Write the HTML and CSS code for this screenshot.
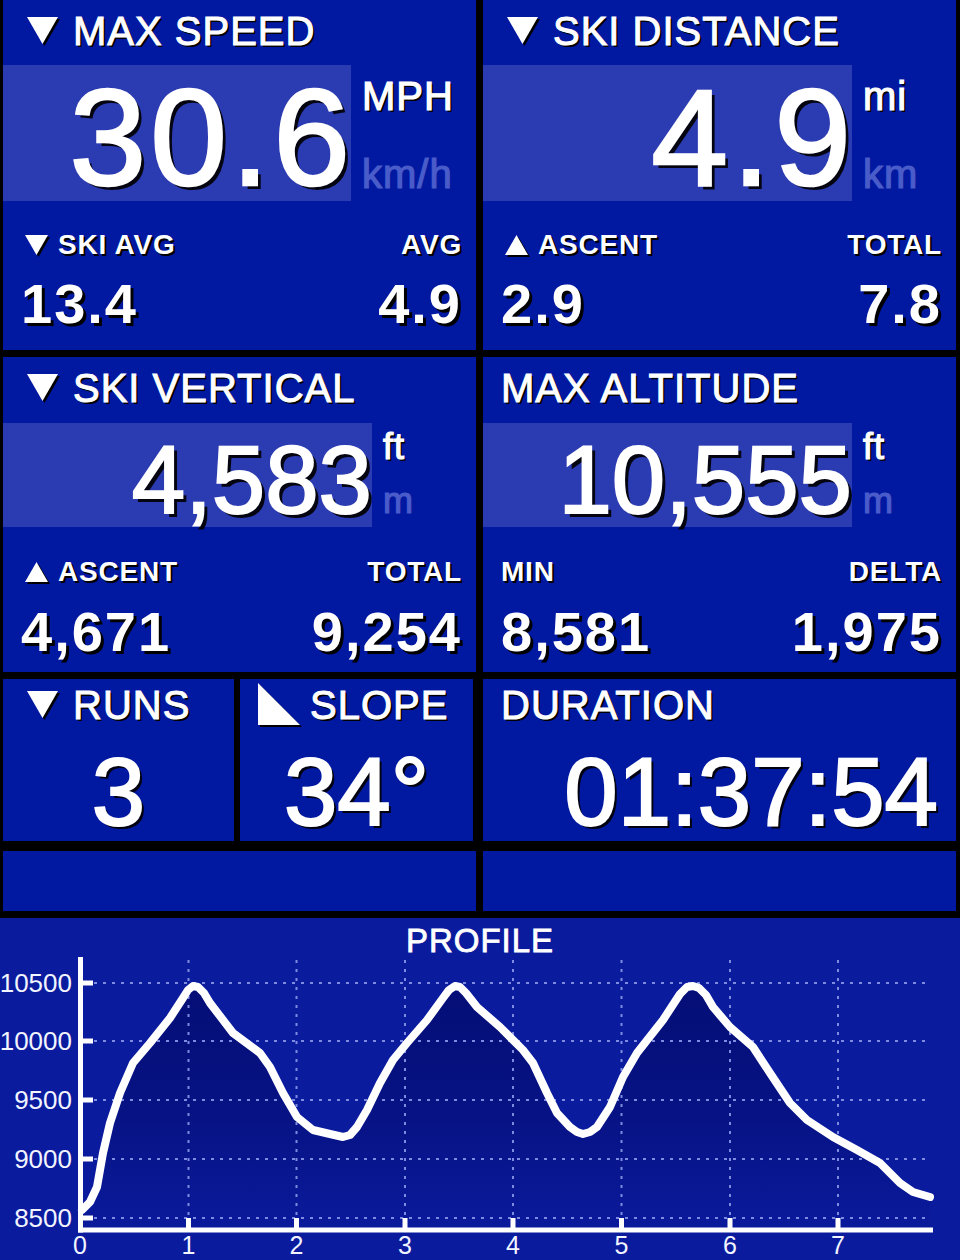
FILE: index.html
```html
<!DOCTYPE html>
<html lang="en">
<head>
    <meta charset="UTF-8">
    <meta name="viewport" content="width=device-width, initial-scale=1.0">
    <title>Ski Tracker</title>
    <link rel="stylesheet" href="styles.css">
</head>
<body>
    <div class="board">
        <div class="row row-main">
            <div class="card card-large">
                <div class="title">
                    <svg class="tri" viewBox="0 0 31 27"><polygon points="0,0 31,0 15.5,27"/></svg>
                    <span>MAX SPEED</span>
                </div>
                <div class="reading">
                    <div class="value-box box-wide"><span class="big">30.6</span></div>
                    <div class="units">
                        <span class="unit">MPH</span>
                        <span class="unit dim">km/h</span>
                    </div>
                </div>
                <div class="stats">
                    <div class="stat-row">
                        <span class="label"><svg class="tri-sm" viewBox="0 0 23 20"><polygon points="0,0 23,0 11.5,20"/></svg>SKI AVG</span>
                        <span class="label">AVG</span>
                    </div>
                    <div class="stat-row values">
                        <span>13.4</span>
                        <span>4.9</span>
                    </div>
                </div>
            </div>
            <div class="card card-large">
                <div class="title">
                    <svg class="tri" viewBox="0 0 31 27"><polygon points="0,0 31,0 15.5,27"/></svg>
                    <span>SKI DISTANCE</span>
                </div>
                <div class="reading">
                    <div class="value-box"><span class="big">4.9</span></div>
                    <div class="units">
                        <span class="unit">mi</span>
                        <span class="unit dim">km</span>
                    </div>
                </div>
                <div class="stats">
                    <div class="stat-row">
                        <span class="label"><svg class="tri-sm" viewBox="0 0 23 20"><polygon points="11.5,0 23,20 0,20"/></svg>ASCENT</span>
                        <span class="label">TOTAL</span>
                    </div>
                    <div class="stat-row values">
                        <span>2.9</span>
                        <span>7.8</span>
                    </div>
                </div>
            </div>
        </div>

        <div class="row row-alt">
            <div class="card card-mid">
                <div class="title">
                    <svg class="tri" viewBox="0 0 31 27"><polygon points="0,0 31,0 15.5,27"/></svg>
                    <span>SKI VERTICAL</span>
                </div>
                <div class="reading">
                    <div class="value-box"><span class="big">4,583</span></div>
                    <div class="units">
                        <span class="unit">ft</span>
                        <span class="unit dim">m</span>
                    </div>
                </div>
                <div class="stats">
                    <div class="stat-row">
                        <span class="label"><svg class="tri-sm" viewBox="0 0 23 20"><polygon points="11.5,0 23,20 0,20"/></svg>ASCENT</span>
                        <span class="label">TOTAL</span>
                    </div>
                    <div class="stat-row values">
                        <span>4,671</span>
                        <span>9,254</span>
                    </div>
                </div>
            </div>
            <div class="card card-mid">
                <div class="title">
                    <span>MAX ALTITUDE</span>
                </div>
                <div class="reading">
                    <div class="value-box"><span class="big">10,555</span></div>
                    <div class="units">
                        <span class="unit">ft</span>
                        <span class="unit dim">m</span>
                    </div>
                </div>
                <div class="stats">
                    <div class="stat-row">
                        <span class="label">MIN</span>
                        <span class="label">DELTA</span>
                    </div>
                    <div class="stat-row values">
                        <span>8,581</span>
                        <span>1,975</span>
                    </div>
                </div>
            </div>
        </div>

        <div class="row row-small">
            <div class="pair">
                <div class="card card-small">
                    <div class="title">
                        <svg class="tri" viewBox="0 0 31 27"><polygon points="0,0 31,0 15.5,27"/></svg>
                        <span>RUNS</span>
                    </div>
                    <div class="count">3</div>
                </div>
                <div class="card card-small">
                    <div class="title">
                        <svg class="slope" viewBox="0 0 42 42"><polygon points="0,0 0,42 42,42"/></svg>
                        <span>SLOPE</span>
                    </div>
                    <div class="count">34°</div>
                </div>
            </div>
            <div class="card card-small">
                <div class="title">
                    <span>DURATION</span>
                </div>
                <div class="count count-right">01:37:54</div>
            </div>
        </div>

        <div class="row row-empty">
            <div class="card"></div>
            <div class="card"></div>
        </div>

        <div class="chart">
            <div class="chart-title">PROFILE</div>
            <svg class="plot" viewBox="0 957 960 303">
                <defs>
                    <linearGradient id="area" x1="0" y1="0" x2="0" y2="1">
                        <stop offset="0" stop-color="#050e76"/>
                        <stop offset="0.55" stop-color="#071385"/>
                        <stop offset="1" stop-color="#0a1a9c"/>
                    </linearGradient>
                </defs>
                <path fill="url(#area)" d="M82,1230 L82,1210 L90,1202 L97,1187 L103,1153 L110,1123 L120,1093 L133,1063 L150,1043 L170,1018 L183,998 L188,990 L193,986 L198,987 L204,993 L210,1003 L233,1033 L260,1053 L270,1067 L283,1093 L297,1117 L313,1130 L330,1134 L343,1137 L350,1135 L357,1127 L367,1110 L380,1083 L393,1060 L407,1043 L427,1020 L443,998 L449,990 L455,986 L460,987 L466,993 L477,1007 L500,1027 L523,1050 L533,1063 L547,1093 L557,1113 L570,1127 L577,1132 L583,1134 L590,1132 L597,1127 L610,1107 L623,1077 L637,1053 L663,1020 L680,994 L687,987 L693,986 L699,988 L706,995 L713,1007 L730,1027 L753,1047 L770,1073 L790,1103 L807,1120 L833,1137 L857,1150 L880,1163 L900,1183 L913,1192 L930,1197 L930,1230 Z"/>
                <g class="grid">
                    <line x1="94" y1="983" x2="930" y2="983"/>
                    <line x1="94" y1="1041" x2="930" y2="1041"/>
                    <line x1="94" y1="1100" x2="930" y2="1100"/>
                    <line x1="94" y1="1159" x2="930" y2="1159"/>
                    <line x1="94" y1="1218" x2="930" y2="1218"/>
                    <line x1="188.5" y1="960" x2="188.5" y2="1216"/>
                    <line x1="296.5" y1="960" x2="296.5" y2="1216"/>
                    <line x1="405" y1="960" x2="405" y2="1216"/>
                    <line x1="513" y1="960" x2="513" y2="1216"/>
                    <line x1="621.5" y1="960" x2="621.5" y2="1216"/>
                    <line x1="730" y1="960" x2="730" y2="1216"/>
                    <line x1="838" y1="960" x2="838" y2="1216"/>
                </g>
                <polyline class="curve" points="82,1210 90,1202 97,1187 103,1153 110,1123 120,1093 133,1063 150,1043 170,1018 183,998 188,990 193,986 198,987 204,993 210,1003 233,1033 260,1053 270,1067 283,1093 297,1117 313,1130 330,1134 343,1137 350,1135 357,1127 367,1110 380,1083 393,1060 407,1043 427,1020 443,998 449,990 455,986 460,987 466,993 477,1007 500,1027 523,1050 533,1063 547,1093 557,1113 570,1127 577,1132 583,1134 590,1132 597,1127 610,1107 623,1077 637,1053 663,1020 680,994 687,987 693,986 699,988 706,995 713,1007 730,1027 753,1047 770,1073 790,1103 807,1120 833,1137 857,1150 880,1163 900,1183 913,1192 930,1197"/>
                <g class="axis">
                    <line x1="80.5" y1="957" x2="80.5" y2="1232.5"/>
                    <line x1="78" y1="1230" x2="933" y2="1230"/>
                    <line x1="80" y1="983" x2="93" y2="983"/>
                    <line x1="80" y1="1041" x2="93" y2="1041"/>
                    <line x1="80" y1="1100" x2="93" y2="1100"/>
                    <line x1="80" y1="1159" x2="93" y2="1159"/>
                    <line x1="80" y1="1218" x2="93" y2="1218"/>
                    <line x1="188.5" y1="1218" x2="188.5" y2="1230"/>
                    <line x1="296.5" y1="1218" x2="296.5" y2="1230"/>
                    <line x1="405" y1="1218" x2="405" y2="1230"/>
                    <line x1="513" y1="1218" x2="513" y2="1230"/>
                    <line x1="621.5" y1="1218" x2="621.5" y2="1230"/>
                    <line x1="730" y1="1218" x2="730" y2="1230"/>
                    <line x1="838" y1="1218" x2="838" y2="1230"/>
                </g>
                <g class="y-labels">
                    <text x="72" y="992">10500</text>
                    <text x="72" y="1050">10000</text>
                    <text x="72" y="1109">9500</text>
                    <text x="72" y="1168">9000</text>
                    <text x="72" y="1227">8500</text>
                </g>
                <g class="x-labels">
                    <text x="80" y="1254">0</text>
                    <text x="188.5" y="1254">1</text>
                    <text x="296.5" y="1254">2</text>
                    <text x="405" y="1254">3</text>
                    <text x="513" y="1254">4</text>
                    <text x="621.5" y="1254">5</text>
                    <text x="730" y="1254">6</text>
                    <text x="838" y="1254">7</text>
                </g>
            </svg>
        </div>
    </div>
</body>
</html>
```

FILE: styles.css
```css
* {
    margin: 0;
    padding: 0;
    box-sizing: border-box;
}

body {
    background-color: #000;
    font-family: "Liberation Sans", Arial, sans-serif;
    color: #fff;
    overflow: hidden;
}

.board {
    width: 960px;
    height: 1260px;
    display: flex;
    flex-direction: column;
    gap: 7px;
}

.row {
    display: grid;
    grid-template-columns: 473px 473px;
    column-gap: 7px;
    padding: 0 4px 0 3px;
}

.row-main {
    height: 350px;
}

.row-alt {
    height: 315px;
}

.row-small {
    height: 162px;
}

.row-empty {
    height: 60px;
    margin-top: 3px;
}

.card {
    background-color: #0119a1;
    display: flex;
    flex-direction: column;
}

.pair {
    display: grid;
    grid-template-columns: 231px 233px;
    column-gap: 6px;
}

/* headings */

.title {
    display: flex;
    align-items: flex-start;
    padding: 11px 0 0 18px;
    font-size: 40px;
    line-height: 40px;
    letter-spacing: 1px;
    -webkit-text-stroke: 1px #fff;
    text-shadow: 2px 2px 0 #000;
    white-space: nowrap;
}

.card-small .title {
    padding-top: 6px;
}

.tri {
    width: 31px;
    height: 27px;
    margin: 6px 15px 0 6px;
    fill: #fff;
    filter: drop-shadow(2px 2px 0 #000);
    flex-shrink: 0;
}

.slope {
    width: 42px;
    height: 42px;
    margin: -2px 10px 0 0;
    fill: #fff;
    filter: drop-shadow(2px 2px 0 #000);
    flex-shrink: 0;
}

/* main reading */

.reading {
    display: flex;
}

.card-large .reading {
    margin-top: 14px;
    height: 136px;
}

.card-mid .reading {
    margin-top: 15px;
    height: 104px;
}

.value-box {
    width: 369px;
    height: 100%;
    background-color: #2b3bb1;
    text-align: right;
    white-space: nowrap;
}

.value-box.box-wide {
    width: 348px;
}

.big {
    display: block;
    -webkit-text-stroke: 2.5px #fff;
    text-shadow: 4px 4px 0 rgba(0, 0, 0, 0.9);
}

.card-large .big {
    font-size: 138px;
    line-height: 138px;
    padding-top: 3px;
    letter-spacing: 4px;
    margin-right: -3px;
}

.card-mid .big {
    font-size: 96px;
    line-height: 96px;
    padding-top: 9px;
    -webkit-text-stroke: 2px #fff;
}

.units {
    display: flex;
    flex-direction: column;
    padding-left: 11px;
}

.unit {
    letter-spacing: 1px;
    -webkit-text-stroke: 1.2px #fff;
    text-shadow: 2px 2px 0 #000;
}

.unit.dim {
    color: #4a5cc9;
    -webkit-text-stroke: 1.2px #4a5cc9;
    text-shadow: none;
}

.card-large .unit {
    font-size: 40px;
    line-height: 40px;
    margin-top: 11px;
}

.card-large .unit.dim {
    margin-top: 38px;
}

.card-mid .unit {
    font-size: 36px;
    line-height: 36px;
    margin-top: 6px;
}

.card-mid .unit.dim {
    margin-top: 18px;
}

/* stat rows */

.stat-row {
    display: flex;
    justify-content: space-between;
    padding: 0 16px 0 18px;
}

.card-large .stats {
    margin-top: 30px;
}

.card-mid .stats {
    margin-top: 31px;
}

.label {
    display: flex;
    align-items: flex-start;
    font-size: 28px;
    line-height: 28px;
    font-weight: bold;
    letter-spacing: 0.8px;
    text-shadow: 2px 2px 0 #000;
}

.tri-sm {
    width: 23px;
    height: 20px;
    margin: 4px 10px 0 4px;
    fill: #fff;
    filter: drop-shadow(2px 2px 0 #000);
}

.stat-row.values {
    margin-top: 17px;
    font-size: 56px;
    line-height: 56px;
    font-weight: bold;
    letter-spacing: 2px;
    text-shadow: 3px 3px 0 #000;
}

.stat-row span:last-child {
    margin-right: -2px;
}

.card-mid .stat-row.values {
    margin-top: 18px;
}

/* counters */

.count {
    margin-top: 19px;
    font-size: 96px;
    line-height: 96px;
    text-align: center;
    -webkit-text-stroke: 2px #fff;
    text-shadow: 3px 3px 0 rgba(0, 0, 0, 0.9);
    white-space: nowrap;
}

.count-right {
    text-align: right;
    padding-right: 18px;
}

/* profile chart */

.chart {
    flex: 1;
    background-color: #0a1b9e;
    display: flex;
    flex-direction: column;
}

.chart-title {
    padding-top: 6px;
    font-size: 33px;
    line-height: 33px;
    letter-spacing: 1px;
    text-align: center;
    -webkit-text-stroke: 0.8px #fff;
}

.plot {
    display: block;
    width: 960px;
    height: 303px;
}

.grid line {
    stroke: #7d8ce0;
    stroke-width: 2;
    stroke-dasharray: 3 6;
}

.curve {
    fill: none;
    stroke: #fff;
    stroke-width: 8;
    stroke-linejoin: round;
    stroke-linecap: round;
}

.axis line {
    stroke: #fff;
    stroke-width: 5;
}

.y-labels text,
.x-labels text {
    fill: #f2f4ff;
    font-family: "Liberation Sans", Arial, sans-serif;
    font-size: 26px;
}

.y-labels text {
    text-anchor: end;
}

.x-labels text {
    font-size: 25px;
    text-anchor: middle;
}
```
